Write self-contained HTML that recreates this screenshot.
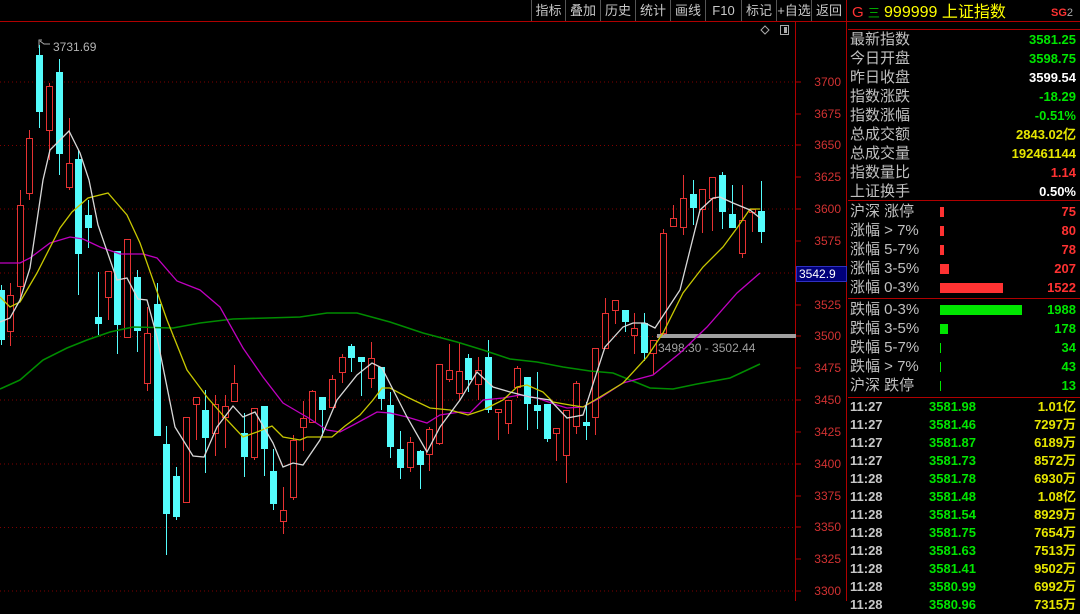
<!DOCTYPE html>
<html><head><meta charset="utf-8"><style>
*{margin:0;padding:0;box-sizing:border-box}
body{width:1080px;height:601px;background:#000;overflow:hidden;position:relative;font-family:"Liberation Sans","Noto Sans CJK SC",sans-serif}
.tb{position:absolute;top:0;height:21px;color:#c8c8c8;font-size:13px;line-height:21px;text-align:center;border-left:1px solid #555}
.p{position:absolute;left:848px;width:232px;font-size:15px;color:#c0c0c0}
.r{position:absolute;height:19px;line-height:19px;left:0;width:230px}
.r .l{position:absolute;left:2px}
.r .v{position:absolute;right:2px;font-family:"Liberation Sans",sans-serif;font-weight:bold;font-size:13px}
.g{color:#00e600}.w{color:#fff}.y{color:#e6e600}.rd{color:#ff3232}
.bar{position:absolute;left:92px;top:5px;height:10px}
.t{position:absolute;left:0;width:230px;height:18px;line-height:18px;font-size:13px;font-weight:bold}
.t span{position:absolute}
</style></head><body>
<svg width="1080" height="601" style="position:absolute;left:0;top:0">
<line x1="0" y1="21.5" x2="1080" y2="21.5" stroke="#b00000"/>
<line x1="795.5" y1="22" x2="795.5" y2="601" stroke="#b00000"/>
<line x1="846.5" y1="0" x2="846.5" y2="601" stroke="#b00000"/>
<g stroke="#800000" stroke-dasharray="1,3">
<line x1="0" y1="82" x2="795" y2="82"/><line x1="0" y1="145.5" x2="795" y2="145.5"/><line x1="0" y1="209" x2="795" y2="209"/><line x1="0" y1="273" x2="795" y2="273"/><line x1="0" y1="336.5" x2="795" y2="336.5"/><line x1="0" y1="400" x2="795" y2="400"/><line x1="0" y1="464" x2="795" y2="464"/><line x1="0" y1="527.5" x2="795" y2="527.5"/><line x1="0" y1="591" x2="795" y2="591"/>
</g>
<g stroke="#b00000"><line x1="796" y1="82" x2="801" y2="82"/><line x1="796" y1="114" x2="801" y2="114"/><line x1="796" y1="145" x2="801" y2="145"/><line x1="796" y1="177" x2="801" y2="177"/><line x1="796" y1="209" x2="801" y2="209"/><line x1="796" y1="241" x2="801" y2="241"/><line x1="796" y1="305" x2="801" y2="305"/><line x1="796" y1="336" x2="801" y2="336"/><line x1="796" y1="368" x2="801" y2="368"/><line x1="796" y1="400" x2="801" y2="400"/><line x1="796" y1="432" x2="801" y2="432"/><line x1="796" y1="464" x2="801" y2="464"/><line x1="796" y1="496" x2="801" y2="496"/><line x1="796" y1="527" x2="801" y2="527"/><line x1="796" y1="559" x2="801" y2="559"/><line x1="796" y1="591" x2="801" y2="591"/></g>
<g fill="#d23232" font-size="12" text-anchor="end" font-family="Liberation Sans">
<text x="841" y="86">3700</text><text x="841" y="118">3675</text><text x="841" y="149">3650</text><text x="841" y="181">3625</text><text x="841" y="213">3600</text><text x="841" y="245">3575</text><text x="841" y="309">3525</text><text x="841" y="340">3500</text><text x="841" y="372">3475</text><text x="841" y="404">3450</text><text x="841" y="436">3425</text><text x="841" y="468">3400</text><text x="841" y="500">3375</text><text x="841" y="531">3350</text><text x="841" y="563">3325</text><text x="841" y="595">3300</text>
</g>
<rect x="796.5" y="266.5" width="50" height="15" fill="#00007a" stroke="#3030c0"/>
<text x="799" y="278" fill="#fff" font-size="12" font-family="Liberation Sans">3542.9</text>
<rect x="657" y="334" width="139" height="4" fill="#a0a0a0"/>
<text x="658" y="352" fill="#a0a0a0" font-size="12" font-family="Liberation Sans">3498.30 - 3502.44</text>
<path d="M765 26 l4 4 l-4 4 l-4 -4z" fill="none" stroke="#aaa"/>
<rect x="780.5" y="25.5" width="8" height="9" fill="none" stroke="#aaa"/><rect x="784" y="27" width="3" height="6" fill="#aaa"/>
<path d="M39 48 V40 h3 M40 41 l4 3 h6" stroke="#aaa" fill="none"/>
<text x="53" y="51" fill="#b4b4b4" font-size="12" font-family="Liberation Sans">3731.69</text>
<g id="c" stroke-width="1">
<!-- wicks -->
<g stroke="#54fcfc">
<line x1="1.5" y1="285" x2="1.5" y2="345"/><line x1="39.5" y1="45" x2="39.5" y2="128"/><line x1="59.5" y1="59" x2="59.5" y2="175"/><line x1="78.5" y1="150" x2="78.5" y2="295"/><line x1="88.5" y1="200" x2="88.5" y2="248"/><line x1="98.5" y1="272" x2="98.5" y2="335"/><line x1="117.5" y1="251" x2="117.5" y2="354"/><line x1="137.5" y1="270" x2="137.5" y2="352"/><line x1="157.5" y1="283" x2="157.5" y2="436"/><line x1="166.5" y1="426" x2="166.5" y2="555"/><line x1="176.5" y1="467" x2="176.5" y2="520"/><line x1="205.5" y1="390" x2="205.5" y2="473"/><line x1="244.5" y1="413" x2="244.5" y2="477"/><line x1="264.5" y1="406" x2="264.5" y2="476"/><line x1="273.5" y1="449" x2="273.5" y2="510"/><line x1="322.5" y1="397" x2="322.5" y2="436"/><line x1="351.5" y1="344" x2="351.5" y2="372"/><line x1="361.5" y1="357" x2="361.5" y2="396"/><line x1="381.5" y1="367" x2="381.5" y2="410"/><line x1="390.5" y1="392" x2="390.5" y2="458"/><line x1="400.5" y1="431" x2="400.5" y2="479"/><line x1="420.5" y1="450" x2="420.5" y2="489"/><line x1="468.5" y1="354" x2="468.5" y2="392"/><line x1="488.5" y1="340" x2="488.5" y2="413"/><line x1="527.5" y1="377" x2="527.5" y2="430"/><line x1="537.5" y1="372" x2="537.5" y2="429"/><line x1="547.5" y1="404" x2="547.5" y2="442"/><line x1="586.5" y1="402" x2="586.5" y2="440"/><line x1="625.5" y1="310" x2="625.5" y2="332"/><line x1="644.5" y1="313" x2="644.5" y2="361"/><line x1="693.5" y1="180" x2="693.5" y2="225"/><line x1="722.5" y1="172" x2="722.5" y2="229"/><line x1="732.5" y1="185" x2="732.5" y2="228"/><line x1="761.5" y1="181" x2="761.5" y2="243"/>
</g>
<g stroke="#e63232">
<line x1="10.5" y1="283" x2="10.5" y2="346"/><line x1="20.5" y1="190" x2="20.5" y2="297"/><line x1="29.5" y1="130" x2="29.5" y2="200"/><line x1="49.5" y1="83" x2="49.5" y2="160"/><line x1="69.5" y1="118" x2="69.5" y2="190"/><line x1="108.5" y1="271" x2="108.5" y2="320"/><line x1="127.5" y1="239" x2="127.5" y2="337"/><line x1="147.5" y1="307" x2="147.5" y2="391"/><line x1="186.5" y1="417" x2="186.5" y2="502"/><line x1="196.5" y1="397" x2="196.5" y2="440"/><line x1="215.5" y1="395" x2="215.5" y2="456"/><line x1="225.5" y1="395" x2="225.5" y2="448"/><line x1="234.5" y1="365" x2="234.5" y2="401"/><line x1="254.5" y1="408" x2="254.5" y2="460"/><line x1="283.5" y1="487" x2="283.5" y2="534"/><line x1="293.5" y1="435" x2="293.5" y2="500"/><line x1="303.5" y1="401" x2="303.5" y2="451"/><line x1="312.5" y1="390" x2="312.5" y2="422"/><line x1="332.5" y1="375" x2="332.5" y2="407"/><line x1="342.5" y1="354" x2="342.5" y2="383"/><line x1="371.5" y1="342" x2="371.5" y2="388"/><line x1="410.5" y1="437" x2="410.5" y2="472"/><line x1="429.5" y1="427" x2="429.5" y2="471"/><line x1="439.5" y1="364" x2="439.5" y2="445"/><line x1="449.5" y1="344" x2="449.5" y2="382"/><line x1="459.5" y1="343" x2="459.5" y2="400"/><line x1="478.5" y1="357" x2="478.5" y2="400"/><line x1="498.5" y1="409" x2="498.5" y2="440"/><line x1="508.5" y1="400" x2="508.5" y2="434"/><line x1="517.5" y1="366" x2="517.5" y2="398"/><line x1="556.5" y1="428" x2="556.5" y2="461"/><line x1="566.5" y1="410" x2="566.5" y2="483"/><line x1="576.5" y1="381" x2="576.5" y2="434"/><line x1="595.5" y1="348" x2="595.5" y2="435"/><line x1="605.5" y1="298" x2="605.5" y2="349"/><line x1="615.5" y1="300" x2="615.5" y2="324"/><line x1="634.5" y1="313" x2="634.5" y2="354"/><line x1="653.5" y1="340" x2="653.5" y2="374"/><line x1="663.5" y1="229" x2="663.5" y2="335"/><line x1="673.5" y1="205" x2="673.5" y2="226"/><line x1="683.5" y1="175" x2="683.5" y2="235"/><line x1="702.5" y1="189" x2="702.5" y2="233"/><line x1="712.5" y1="177" x2="712.5" y2="231"/><line x1="742.5" y1="185" x2="742.5" y2="258"/><line x1="752.5" y1="209" x2="752.5" y2="232"/>
</g>
<g fill="#54fcfc">
<rect x="-2" y="290" width="7" height="50"/><rect x="36" y="55" width="7" height="57"/><rect x="56" y="72" width="7" height="82"/><rect x="75" y="159" width="7" height="95"/><rect x="85" y="215" width="7" height="13"/><rect x="95" y="317" width="7" height="7"/><rect x="114" y="251" width="7" height="74"/><rect x="134" y="277" width="7" height="54"/><rect x="154" y="304" width="7" height="132"/><rect x="163" y="444" width="7" height="70"/><rect x="173" y="476" width="7" height="41"/><rect x="202" y="410" width="7" height="28"/><rect x="241" y="433" width="7" height="24"/><rect x="261" y="406" width="7" height="43"/><rect x="270" y="471" width="7" height="33"/><rect x="319" y="397" width="7" height="13"/><rect x="348" y="346" width="7" height="12"/><rect x="358" y="357" width="7" height="5"/><rect x="378" y="367" width="7" height="32"/><rect x="387" y="405" width="7" height="42"/><rect x="397" y="449" width="7" height="19"/><rect x="417" y="451" width="7" height="14"/><rect x="465" y="358" width="7" height="22"/><rect x="485" y="357" width="7" height="53"/><rect x="524" y="377" width="7" height="27"/><rect x="534" y="405" width="7" height="6"/><rect x="544" y="404" width="7" height="35"/><rect x="583" y="422" width="7" height="4"/><rect x="622" y="310" width="7" height="12"/><rect x="641" y="323" width="7" height="30"/><rect x="690" y="194" width="7" height="14"/><rect x="719" y="175" width="7" height="37"/><rect x="729" y="214" width="7" height="14"/><rect x="758" y="211" width="7" height="21"/>
</g>
<g fill="#000" stroke="#e63232">
<rect x="7.5" y="295.5" width="6" height="36"/><rect x="17.5" y="205.5" width="6" height="81"/><rect x="26.5" y="138.5" width="6" height="55"/><rect x="46.5" y="86.5" width="6" height="44"/><rect x="66.5" y="163.5" width="6" height="24"/><rect x="105.5" y="271.5" width="6" height="26"/><rect x="124.5" y="239.5" width="6" height="98"/><rect x="144.5" y="333.5" width="6" height="50"/><rect x="183.5" y="417.5" width="6" height="85"/><rect x="193.5" y="397.5" width="6" height="7"/><rect x="212.5" y="404.5" width="6" height="29"/><rect x="222.5" y="406.5" width="6" height="11"/><rect x="231.5" y="383.5" width="6" height="18"/><rect x="251.5" y="408.5" width="6" height="49"/><rect x="280.5" y="510.5" width="6" height="11"/><rect x="290.5" y="440.5" width="6" height="57"/><rect x="300.5" y="418.5" width="6" height="9"/><rect x="309.5" y="391.5" width="6" height="31"/><rect x="329.5" y="379.5" width="6" height="28"/><rect x="339.5" y="357.5" width="6" height="15"/><rect x="368.5" y="358.5" width="6" height="20"/><rect x="407.5" y="442.5" width="6" height="25"/><rect x="426.5" y="429.5" width="6" height="25"/><rect x="436.5" y="364.5" width="6" height="79"/><rect x="446.5" y="370.5" width="6" height="9"/><rect x="456.5" y="371.5" width="6" height="22"/><rect x="475.5" y="370.5" width="6" height="14"/><rect x="495.5" y="409.5" width="6" height="3"/><rect x="505.5" y="400.5" width="6" height="23"/><rect x="514.5" y="368.5" width="6" height="19"/><rect x="553.5" y="428.5" width="6" height="5"/><rect x="563.5" y="410.5" width="6" height="45"/><rect x="573.5" y="383.5" width="6" height="43"/><rect x="592.5" y="348.5" width="6" height="69"/><rect x="602.5" y="313.5" width="6" height="35"/><rect x="612.5" y="300.5" width="6" height="10"/><rect x="631.5" y="328.5" width="6" height="7"/><rect x="650.5" y="340.5" width="6" height="13"/><rect x="660.5" y="233.5" width="6" height="100"/><rect x="670.5" y="218.5" width="6" height="8"/><rect x="680.5" y="198.5" width="6" height="29"/><rect x="699.5" y="189.5" width="6" height="20"/><rect x="709.5" y="177.5" width="6" height="21"/><rect x="739.5" y="220.5" width="6" height="33"/><rect x="749.5" y="209.5" width="6" height="3"/>
</g>
</g>
<g fill="none" stroke-width="1.3">
<polyline stroke="#008c00" stroke-width="1.6" points="0,389 20,380 43,360 67,348 87,340 110,332 133,327 173,328 200,323 233,319 267,318 300,317 327,313 357,313 390,322 423,333 457,342 483,350 510,359 537,362 563,367 590,371 613,373 650,388 673,389 697,384 730,378 760,364"/>
<polyline stroke="#c000c0" points="0,263 20,263 30,258 50,243 70,237 83,239 100,247 120,254 143,254 157,258 177,281 200,290 220,307 243,348 263,377 283,403 300,413 307,417 327,430 340,432 357,423 377,412 390,413 407,417 427,423 440,415 460,412 470,413 483,400 503,398 520,395 537,398 557,405 567,408 583,407 600,398 623,383 653,375 680,353 707,327 737,293 760,273"/>
<polyline stroke="#c8c800" points="0,297 10,307 20,302 37,273 60,228 72,212 88,198 108,193 127,215 140,243 153,280 167,320 187,370 207,397 227,420 243,437 257,432 272,426 283,437 300,440 307,437 332,437 345,426 360,415 373,400 382,388 390,388 407,397 430,408 450,410 468,415 483,410 503,400 517,387 527,385 543,392 553,402 570,405 583,407 600,397 623,383 647,357 663,333 683,293 703,267 723,247 737,228 750,209 760,209"/>
<polyline stroke="#d8d8d8" points="0,322 10,318 20,300 30,268 43,180 50,150 60,140 69,131 80,153 89,180 98,225 117,280 127,278 138,299 147,300 157,337 175,427 193,456 204,457 217,427 233,406 243,417 255,412 273,443 283,467 293,463 303,465 320,440 337,400 357,375 372,363 382,368 407,417 427,452 440,427 460,400 477,372 493,387 510,392 530,397 550,400 567,418 583,415 605,347 623,327 633,323 645,323 655,328 680,290 700,210 713,198 720,197 733,203 750,210 760,218"/>
</g>
<line x1="848" y1="29.5" x2="1080" y2="29.5" stroke="#b00000"/>
<line x1="848" y1="200.5" x2="1080" y2="200.5" stroke="#b00000"/>
<line x1="848" y1="298.5" x2="1080" y2="298.5" stroke="#b00000"/>
<line x1="848" y1="397.5" x2="1080" y2="397.5" stroke="#b00000"/>
</svg>
<div class="tb" style="left:531px;width:34px">指标</div>
<div class="tb" style="left:565px;width:35px">叠加</div>
<div class="tb" style="left:600px;width:35px">历史</div>
<div class="tb" style="left:635px;width:35px">统计</div>
<div class="tb" style="left:670px;width:35px">画线</div>
<div class="tb" style="left:705px;width:36px">F10</div>
<div class="tb" style="left:741px;width:35px">标记</div>
<div class="tb" style="left:776px;width:35px">+自选</div>
<div class="tb" style="left:811px;width:35px">返回</div>
<div style="position:absolute;left:852px;top:3px;font-size:15px;line-height:20px;white-space:nowrap"><span style="color:#ff3232">G</span> <span style="color:#00c000;font-size:12px">三</span> <span style="color:#ffff00;font-size:16px">999999 上证指数</span></div>
<div style="position:absolute;left:1051px;top:7px;font-size:11px;font-weight:bold;color:#ff3232">SG<span style="color:#aaa;font-weight:normal">2</span></div>
<div class="p" style="top:30px">
<div class="r" style="top:0"><span class="l">最新指数</span><span class="v g">3581.25</span></div>
<div class="r" style="top:19px"><span class="l">今日开盘</span><span class="v g">3598.75</span></div>
<div class="r" style="top:38px"><span class="l">昨日收盘</span><span class="v w">3599.54</span></div>
<div class="r" style="top:57px"><span class="l">指数涨跌</span><span class="v g">-18.29</span></div>
<div class="r" style="top:76px"><span class="l">指数涨幅</span><span class="v g">-0.51%</span></div>
<div class="r" style="top:95px"><span class="l">总成交额</span><span class="v y">2843.02亿</span></div>
<div class="r" style="top:114px"><span class="l">总成交量</span><span class="v y">192461144</span></div>
<div class="r" style="top:133px"><span class="l">指数量比</span><span class="v rd">1.14</span></div>
<div class="r" style="top:152px"><span class="l">上证换手</span><span class="v w">0.50%</span></div>
</div>
<div class="p" style="top:202px">
<div class="r" style="top:0"><span class="l">沪深 涨停</span><div class="bar" style="background:#ff3232;width:4px"></div><span class="v rd">75</span></div>
<div class="r" style="top:19px"><span class="l">涨幅 &gt; 7%</span><div class="bar" style="background:#ff3232;width:4px"></div><span class="v rd">80</span></div>
<div class="r" style="top:38px"><span class="l">涨幅 5-7%</span><div class="bar" style="background:#ff3232;width:4px"></div><span class="v rd">78</span></div>
<div class="r" style="top:57px"><span class="l">涨幅 3-5%</span><div class="bar" style="background:#ff3232;width:9px"></div><span class="v rd">207</span></div>
<div class="r" style="top:76px"><span class="l">涨幅 0-3%</span><div class="bar" style="background:#ff3232;width:63px"></div><span class="v rd">1522</span></div>
<div class="r" style="top:98px"><span class="l">跌幅 0-3%</span><div class="bar" style="background:#00e600;width:82px"></div><span class="v g">1988</span></div>
<div class="r" style="top:117px"><span class="l">跌幅 3-5%</span><div class="bar" style="background:#00e600;width:8px"></div><span class="v g">178</span></div>
<div class="r" style="top:136px"><span class="l">跌幅 5-7%</span><div class="bar" style="background:#00e600;width:1px"></div><span class="v g">34</span></div>
<div class="r" style="top:155px"><span class="l">跌幅 &gt; 7%</span><div class="bar" style="background:#00e600;width:1px"></div><span class="v g">43</span></div>
<div class="r" style="top:174px"><span class="l">沪深 跌停</span><div class="bar" style="background:#00e600;width:1px"></div><span class="v g">13</span></div>
</div>
<div class="p" style="top:398px">
<div class="t" style="top:0"><span style="left:2px;color:#c8c8c8">11:27</span><span style="left:81px" class="g">3581.98</span><span style="right:2px" class="y">1.01亿</span></div>
<div class="t" style="top:18px"><span style="left:2px;color:#c8c8c8">11:27</span><span style="left:81px" class="g">3581.46</span><span style="right:2px" class="y">7297万</span></div>
<div class="t" style="top:36px"><span style="left:2px;color:#c8c8c8">11:27</span><span style="left:81px" class="g">3581.87</span><span style="right:2px" class="y">6189万</span></div>
<div class="t" style="top:54px"><span style="left:2px;color:#c8c8c8">11:27</span><span style="left:81px" class="g">3581.73</span><span style="right:2px" class="y">8572万</span></div>
<div class="t" style="top:72px"><span style="left:2px;color:#c8c8c8">11:28</span><span style="left:81px" class="g">3581.78</span><span style="right:2px" class="y">6930万</span></div>
<div class="t" style="top:90px"><span style="left:2px;color:#c8c8c8">11:28</span><span style="left:81px" class="g">3581.48</span><span style="right:2px" class="y">1.08亿</span></div>
<div class="t" style="top:108px"><span style="left:2px;color:#c8c8c8">11:28</span><span style="left:81px" class="g">3581.54</span><span style="right:2px" class="y">8929万</span></div>
<div class="t" style="top:126px"><span style="left:2px;color:#c8c8c8">11:28</span><span style="left:81px" class="g">3581.75</span><span style="right:2px" class="y">7654万</span></div>
<div class="t" style="top:144px"><span style="left:2px;color:#c8c8c8">11:28</span><span style="left:81px" class="g">3581.63</span><span style="right:2px" class="y">7513万</span></div>
<div class="t" style="top:162px"><span style="left:2px;color:#c8c8c8">11:28</span><span style="left:81px" class="g">3581.41</span><span style="right:2px" class="y">9502万</span></div>
<div class="t" style="top:180px"><span style="left:2px;color:#c8c8c8">11:28</span><span style="left:81px" class="g">3580.99</span><span style="right:2px" class="y">6992万</span></div>
<div class="t" style="top:198px"><span style="left:2px;color:#c8c8c8">11:28</span><span style="left:81px" class="g">3580.96</span><span style="right:2px" class="y">7315万</span></div>
</div>
</body></html>
